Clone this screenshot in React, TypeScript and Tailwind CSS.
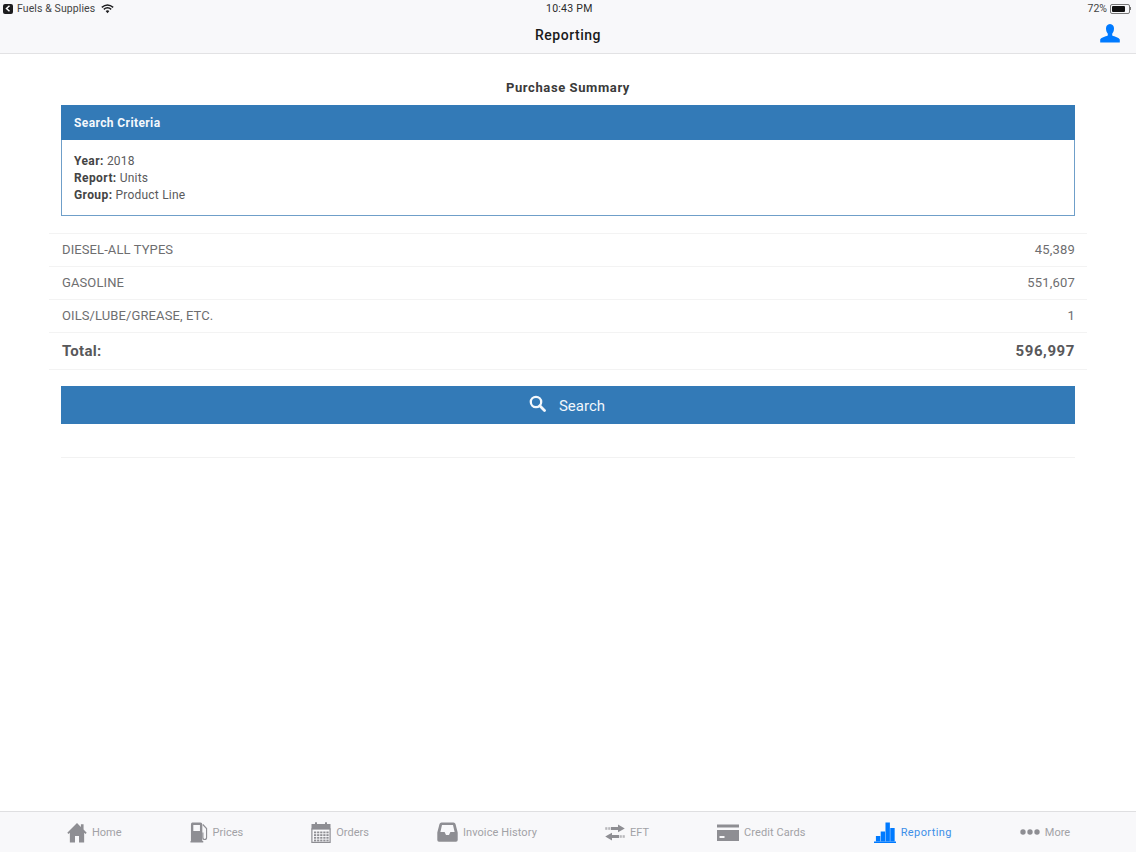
import React from "react";

const font = { fontFamily: 'Roboto, "Liberation Sans", Arial, sans-serif' };

function Home() {
  return (
    <svg width="20" height="21" viewBox="0 0 21 21" fill="#8e8e93" preserveAspectRatio="none">
      <path d="M10.5 1 L0.3 10.8 L1.6 12 L3 10.8 V20.5 H8.4 V14 H12.6 V20.5 H18 V10.8 L19.4 12 L20.7 10.8 L17.4 7.6 V2.2 H14.6 V4.9 Z" />
    </svg>
  );
}
function Pump() {
  return (
    <svg width="18" height="21" viewBox="0 0 19 21" fill="#8e8e93" preserveAspectRatio="none">
      <path fillRule="evenodd" d="M2.5 0.5 H11 Q13 0.5 13 2.5 V19 H14 V20.5 H0.5 V19 H1 V2.5 Q1 0.5 2.5 0.5 Z M3.5 3 V9 H10.5 V3 Z" />
      <path d="M13.5 2.5 L17.5 6.5 V15.5 Q17.5 17.5 15.5 17.5 Q13.6 17.5 13.6 15.5 V11 H13" fill="none" stroke="#8e8e93" strokeWidth="1.2" />
    </svg>
  );
}
function Calendar() {
  const cells = [];
  for (let r = 0; r < 4; r++) for (let c = 0; c < 5; c++) cells.push(<rect key={r + "-" + c} x={3 + c * 3.1} y={9.5 + r * 2.7} width="2.2" height="1.8" fill="#8e8e93" />);
  return (
    <svg width="20" height="21" viewBox="0 0 20 21" fill="#8e8e93">
      <rect x="0.5" y="2" width="19" height="5.5" />
      <rect x="4" y="0.3" width="2" height="3" />
      <rect x="14" y="0.3" width="2" height="3" />
      <rect x="0.9" y="7" width="18.2" height="13.4" fill="#f8f8fa" stroke="#8e8e93" strokeWidth="1.2" />
      {cells}
    </svg>
  );
}
function Inbox() {
  return (
    <svg width="21" height="20" viewBox="0 0 21 20" fill="#8e8e93">
      <path fillRule="evenodd" d="M4.5 0.5 H16.5 Q18 0.5 18.5 2 L20.7 10.5 V18 Q20.7 19.8 19 19.8 H2 Q0.3 19.8 0.3 18 V10.5 L2.5 2 Q3 0.5 4.5 0.5 Z M5 3 L3.4 10 H7.6 L9 13 H12 L13.4 10 H17.6 L16 3 Z" />
    </svg>
  );
}
function Transfer() {
  return (
    <svg width="20" height="17" viewBox="0 0 20 17" fill="#8e8e93">
      <path d="M13 0.5 L19.8 4.5 L13 8.2 V6 H6 V3 H13 Z" />
      <rect x="0.2" y="3.2" width="2.2" height="2.6" opacity="0.6" />
      <rect x="3.2" y="3.2" width="2.2" height="2.6" opacity="0.6" />
      <path d="M7 8.8 L0.2 12.5 L7 16.5 V14 H14 V11 H7 Z" />
      <rect x="14.6" y="11.2" width="2.2" height="2.6" opacity="0.6" />
      <rect x="17.6" y="11.2" width="2.2" height="2.6" opacity="0.6" />
    </svg>
  );
}
function Card() {
  return (
    <svg width="22" height="17" viewBox="0 0 22 17" fill="#8e8e93">
      <rect x="0" y="0.5" width="22" height="3" />
      <rect x="0" y="6" width="22" height="11" />
      <rect x="2.5" y="12" width="5" height="2" fill="#f8f8fa" />
    </svg>
  );
}
function Bars() {
  return (
    <svg width="22" height="21" viewBox="0 0 23 21" fill="#007aff" preserveAspectRatio="none">
      <rect x="2" y="14" width="4.6" height="5.5" />
      <rect x="7" y="9.5" width="4.6" height="10" />
      <rect x="12" y="0.5" width="4.6" height="19" />
      <rect x="17" y="6" width="4.6" height="13.5" />
      <rect x="0" y="19.5" width="23" height="1.5" />
    </svg>
  );
}
function Dots() {
  return (
    <svg width="20" height="6" viewBox="0 0 20 6" fill="#8e8e93">
      <circle cx="3" cy="3" r="2.7" />
      <circle cx="10" cy="3" r="2.7" />
      <circle cx="17" cy="3" r="2.7" />
    </svg>
  );
}

function Tab({ icon, label, active, wide }: { icon: React.ReactNode; label: string; active?: boolean; wide?: boolean }) {
  return (
    <div className="flex items-center gap-[5px]">
      {icon}
      <span className={"mt-[2px] text-[11px] " + (active ? "text-[#3d8fe8] tracking-[0.4px]" : "text-[#a2a2a6]") + (wide ? " tracking-[0.1px]" : "")}>{label}</span>
    </div>
  );
}

function Row({ name, value }: { name: string; value: string }) {
  return (
    <div className="h-[33px] flex items-center justify-between border-t border-[#f3f3f3] pl-[13px] pr-[12px] text-[13px] text-[#6e6e70] tracking-[0.1px]">
      <span>{name}</span>
      <span className="tracking-[0.2px]">{value}</span>
    </div>
  );
}

export default function App() {
  return (
    <div style={font} className="w-[1136px] h-[852px] flex flex-col bg-white overflow-hidden">
      <header className="h-[54px] shrink-0 bg-[#f8f8fa] border-b border-[#e2e2e4] flex flex-col">
        <div className="h-[17px] relative flex items-center justify-between pl-[3px] pr-[4px] text-[10px] text-[#2a2a2a]">
          <div className="flex items-center gap-[4px]">
            <span className="w-[10px] h-[10px] rounded-[2px] bg-[#1c1c1e] flex items-center justify-center">
              <svg width="6" height="7" viewBox="0 0 6 7"><path d="M4.5 0.8 L1.5 3.5 L4.5 6.2" fill="none" stroke="#fff" strokeWidth="1.5" /></svg>
            </span>
            <span className="text-[#444] text-[10.5px] tracking-[0.1px]">Fuels &amp; Supplies</span>
            <svg className="ml-[2px]" width="13" height="10" viewBox="0 0 13 10">
              <path d="M0.8 3.4 Q6.5 -1.4 12.2 3.4" fill="none" stroke="#1c1c1e" strokeWidth="1.4" />
              <path d="M2.8 5.4 Q6.5 2.2 10.2 5.4" fill="none" stroke="#1c1c1e" strokeWidth="1.4" />
              <path d="M4.6 7 Q6.5 5.5 8.4 7 L6.5 9.2 Z" fill="#1c1c1e" />
            </svg>
          </div>
          <span className="absolute left-[546px] text-[10.5px] tracking-[0.25px]">10:43 PM</span>
          <div className="flex items-center gap-[3px]">
            <span className="text-[#444] text-[10.5px]">72%</span>
            <span className="w-[20px] h-[10px] border border-[#777] rounded-[2px] p-[1px] flex">
              <span className="w-[13px] bg-[#111] rounded-[1px]" />
            </span>
            <span className="w-[1px] h-[3px] bg-[#777] -ml-[3px] mr-[1px]" />
          </div>
        </div>
        <div className="flex-1 relative flex items-center justify-center">
          <span className="text-[14px] font-medium text-[#1a1a1a] tracking-[0.5px]">Reporting</span>
          <svg className="absolute right-[16px] top-[7px]" width="20" height="19" viewBox="0 0 20 19" fill="#007aff">
            <path d="M10 0 C7.2 0 6 2.2 6 4.6 C6 7 7 8.8 7.8 9.8 V11.4 C5.5 12.6 0.6 13.4 0.2 15.6 V18.6 H19.8 V15.6 C19.4 13.4 14.5 12.6 12.2 11.4 V9.8 C13 8.8 14 7 14 4.6 C14 2.2 12.8 0 10 0 Z" />
          </svg>
        </div>
      </header>

      <main className="flex-1 flex flex-col">
        <h1 className="text-[13px] font-bold text-[#3a3a3a] text-center mt-[26px] leading-[15px] tracking-[0.6px]">Purchase Summary</h1>

        <section className="mx-[61px] mt-[10px] h-[111px] border border-[#6f9fc9] flex flex-col shrink-0">
          <div className="h-[35px] shrink-0 bg-[#337ab7] -mx-[1px] -mt-[1px] flex items-center px-[13px] text-[12px] font-bold text-[#f4f8fc] tracking-[0.4px]">Search Criteria</div>
          <div className="pt-[13px] px-3 text-[12px] leading-[17px] text-[#5a5a5c] tracking-[0.2px]">
            <div><b className="text-[#444] tracking-[0.4px]">Year:</b> 2018</div>
            <div><b className="text-[#444] tracking-[0.4px]">Report:</b> Units</div>
            <div><b className="text-[#444] tracking-[0.4px]">Group:</b> Product Line</div>
          </div>
        </section>

        <div className="mx-[49px] mt-[17px]">
          <Row name="DIESEL-ALL TYPES" value="45,389" />
          <Row name="GASOLINE" value="551,607" />
          <Row name="OILS/LUBE/GREASE, ETC." value="1" />
          <div className="h-[38px] flex items-center justify-between border-t border-b border-[#f3f3f3] pl-[13px] pr-[12px] text-[15px] font-bold text-[#58585a] tracking-[0.3px]">
            <span>Total:</span>
            <span className="tracking-[0.6px]">596,997</span>
          </div>
        </div>

        <button className="mx-[61px] mt-[16px] h-[38px] shrink-0 bg-[#337ab7] text-[#f0f6fb] text-[15px] pr-[2px] flex items-center justify-center gap-[13px]">
          <svg className="-mt-[3px]" width="17" height="17" viewBox="0 0 17 17" fill="none" stroke="#f4f8fc">
            <circle cx="7" cy="7" r="5.2" strokeWidth="2.3" />
            <path d="M10.8 10.8 L15.5 15.5" strokeWidth="2.8" strokeLinecap="round" />
          </svg>
          <span className="mt-[2px]">Search</span>
        </button>

        <hr className="mx-[61px] mt-[33px] border-t border-[#f2f2f2]" />
      </main>

      <nav className="h-[41px] shrink-0 bg-[#f8f8fa] border-t border-[#dfdfe1] flex items-center gap-[68px] pl-[67px]">
        <Tab icon={<Home />} label="Home" />
        <Tab icon={<Pump />} label="Prices" />
        <Tab icon={<Calendar />} label="Orders" />
        <Tab icon={<Inbox />} label="Invoice History" wide />
        <Tab icon={<Transfer />} label="EFT" />
        <Tab icon={<Card />} label="Credit Cards" wide />
        <Tab icon={<Bars />} label="Reporting" active />
        <Tab icon={<Dots />} label="More" />
      </nav>
    </div>
  );
}
